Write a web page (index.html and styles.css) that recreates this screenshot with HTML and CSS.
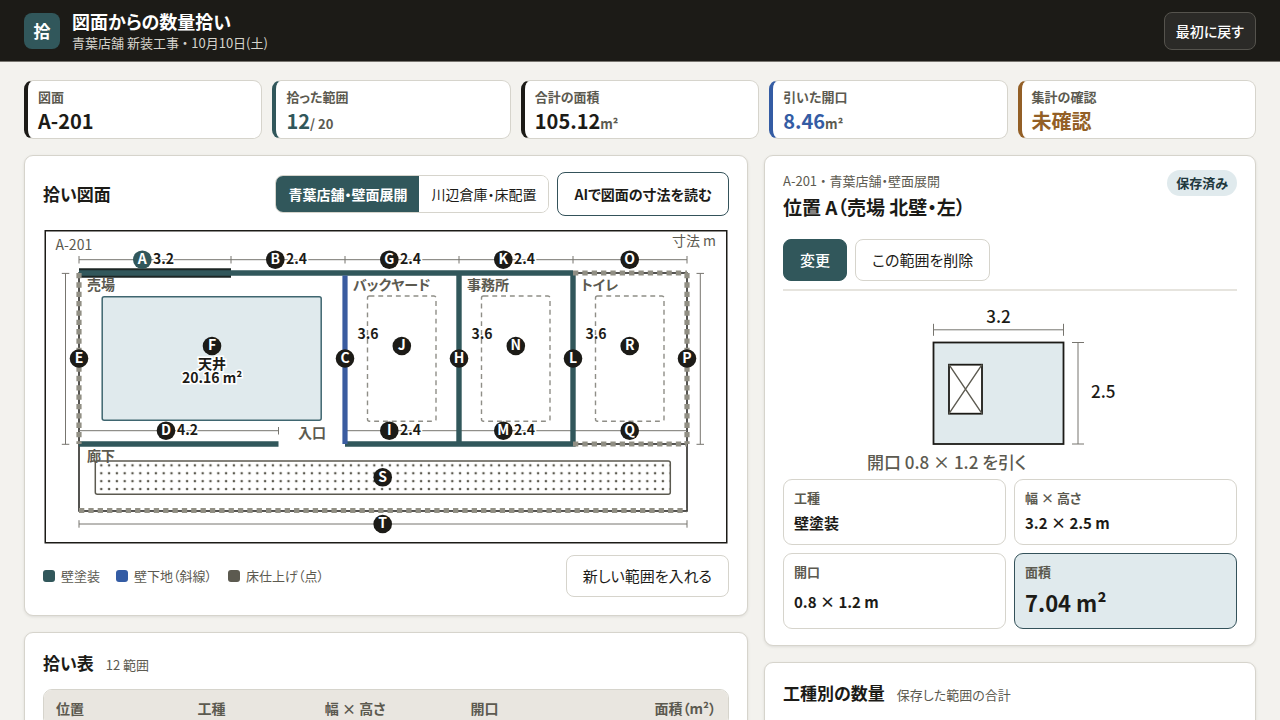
FILE: index.html
```html
<!DOCTYPE html>
<html lang="ja">
<head>
<meta charset="utf-8">
<meta name="viewport" content="width=device-width, initial-scale=1">
<title>図面からの数量拾い</title>
<link rel="stylesheet" href="styles.css">
</head>
<body>
<header class="topbar">
  <div class="logo" aria-hidden="true">拾</div>
  <div class="brand">
    <h1 class="brand-title">図面からの数量拾い</h1>
    <p class="brand-sub">青葉店舗 新装工事 ・ 10月10日(土)</p>
  </div>
  <button class="btn btn-dark" type="button">最初に戻す</button>
</header>

<main class="page">
  <section class="stats" aria-label="集計">
    <div class="stat"><span class="stat-label">図面</span><span class="stat-value">A-201</span></div>
    <div class="stat stat-teal"><span class="stat-label">拾った範囲</span><span class="stat-value">12<small class="unit">/ 20</small></span></div>
    <div class="stat"><span class="stat-label">合計の面積</span><span class="stat-value">105.12<small class="unit">m²</small></span></div>
    <div class="stat stat-blue"><span class="stat-label">引いた開口</span><span class="stat-value">8.46<small class="unit">m²</small></span></div>
    <div class="stat stat-amber"><span class="stat-label">集計の確認</span><span class="stat-value">未確認</span></div>
  </section>

  <div class="columns">
    <div class="column">
      <section class="panel drawing">
        <div class="drawing-head">
          <h2 class="panel-title">拾い図面</h2>
          <div class="segment" role="group" aria-label="図面の切り替え">
            <button class="segment-item is-active" type="button" aria-pressed="true">青葉店舗・壁面展開</button>
            <button class="segment-item" type="button" aria-pressed="false">川辺倉庫・床配置</button>
          </div>
          <button class="btn btn-outline" type="button">AIで図面の寸法を読む</button>
        </div>

        <svg class="plan" viewBox="43 228 686 317" role="img" aria-label="A-201 平面図">
          <defs>
            <pattern id="dots" x="97.4" y="461.4" width="7.8" height="7.9" patternUnits="userSpaceOnUse">
              <circle cx="3.9" cy="3.95" r="1.3" fill="#5c5a50"/>
            </pattern>
          </defs>
          <rect x="45.25" y="230.75" width="681.5" height="312" fill="#fff" stroke="#1c1b17" stroke-width="1.5"/>
          <text class="t-note" x="55.5" y="249.5">A-201</text>
          <text class="t-note" x="716" y="246" text-anchor="end">寸法 m</text>

          <rect x="79" y="273" width="608" height="238" fill="none" stroke="#1c1b17" stroke-width="1.5"/>
          <path d="M573 444H687" stroke="#1c1b17" stroke-width="1.5"/>

          <g class="dim">
            <path d="M79 259.7H687M79 256v7.5M231 256v7.5M345 256v7.5M459 256v7.5M573 256v7.5M687 256v7.5"/>
            <path d="M65.5 273.4V444.3M61.8 273.4h7.5M61.8 444.3h7.5M700.3 273.4V444.3M696.5 273.4h7.5M696.5 444.3h7.5"/>
            <path d="M79 430.7H278.5M278.5 427v7.5M345 430.7H687"/>
            <path d="M79 524H687M79 520.2v7.5M687 520.2v7.5"/>
          </g>

          <g class="t-room">
            <text x="87" y="290">売場</text>
            <text x="353" y="290">バックヤード</text>
            <text x="467" y="290">事務所</text>
            <text x="581" y="290">トイレ</text>
            <text x="87" y="461">廊下</text>
            <text x="298" y="438">入口</text>
          </g>
          <g class="t-dim" text-anchor="middle">
            <text x="368" y="338.5">3.6</text>
            <text x="482" y="338.5">3.6</text>
            <text x="596" y="338.5">3.6</text>
          </g>

          <rect x="102.2" y="296.7" width="219" height="123.5" rx="2" fill="#e0eaed" stroke="#3f6670" stroke-width="1.5"/>
          <g fill="none" stroke="#8f8e87" stroke-width="1.4" stroke-dasharray="4.9 3.9">
            <rect x="367.5" y="296" width="68.5" height="125.3" rx="2"/>
            <rect x="481.5" y="296" width="68.5" height="125.3" rx="2"/>
            <rect x="595.5" y="296" width="68.5" height="125.3" rx="2"/>
          </g>
          <rect x="95.3" y="461" width="575" height="33.3" rx="2" fill="url(#dots)" stroke="#5c5a50" stroke-width="1.5"/>

          <g stroke="#31575b" stroke-width="5.4">
            <path d="M231 273H573M459 273V444M573 273V446.8M345 444H573M79 444H278.5" fill="none"/>
          </g>
          <path d="M345 275.5V444" stroke="#3a5ca0" stroke-width="5.2"/>
          <path d="M79 273H231" stroke="#1c2625" stroke-width="9.6"/>
          <path d="M79 273H231" stroke="#31575b" stroke-width="5.4"/>
          <g stroke="#918f84" stroke-width="5.2" stroke-dasharray="5.3 4.05" fill="none">
            <path d="M79 273V444"/>
            <path d="M687 273V444"/>
            <path d="M573 273H687"/>
            <path d="M573 444H687"/>
            <path d="M79 510.5H687"/>
          </g>

          <g class="t-dim">
            <text x="153" y="263.5">3.2</text>
            <text x="286" y="263.5">2.4</text>
            <text x="400" y="263.5">2.4</text>
            <text x="514" y="263.5">2.4</text>
            <text x="177" y="435">4.2</text>
            <text x="400" y="435">2.4</text>
            <text x="514" y="435">2.4</text>
            <text x="212" y="369" text-anchor="middle">天井</text>
            <text x="212" y="383" text-anchor="middle">20.16 m²</text>
          </g>

          <g fill="#1c1b17">
            <circle cx="142.3" cy="259.7" r="9.3" fill="#31575b"/>
            <circle cx="275.3" cy="259.7" r="9.3"/>
            <circle cx="389.3" cy="259.7" r="9.3"/>
            <circle cx="503.3" cy="259.7" r="9.3"/>
            <circle cx="629.7" cy="259.7" r="9.3"/>
            <circle cx="79" cy="358.5" r="9.3"/>
            <circle cx="345" cy="358.5" r="9.3"/>
            <circle cx="459" cy="358.5" r="9.3"/>
            <circle cx="573" cy="358.5" r="9.3"/>
            <circle cx="687" cy="358.5" r="9.3"/>
            <circle cx="212" cy="346" r="9.3"/>
            <circle cx="401.8" cy="346" r="9.3"/>
            <circle cx="515.8" cy="346" r="9.3"/>
            <circle cx="629.7" cy="346" r="9.3"/>
            <circle cx="166" cy="430.7" r="9.3"/>
            <circle cx="389.3" cy="430.7" r="9.3"/>
            <circle cx="503.3" cy="430.7" r="9.3"/>
            <circle cx="629.7" cy="430.7" r="9.3"/>
            <circle cx="382.7" cy="477.3" r="9.3"/>
            <circle cx="382.7" cy="524" r="9.3"/>
          </g>
          <g class="t-pin">
            <text x="142.3" y="264">A</text>
            <text x="275.3" y="264">B</text>
            <text x="389.3" y="264">G</text>
            <text x="503.3" y="264">K</text>
            <text x="629.7" y="264">O</text>
            <text x="79" y="363">E</text>
            <text x="345" y="363">C</text>
            <text x="459" y="363">H</text>
            <text x="573" y="363">L</text>
            <text x="687" y="363">P</text>
            <text x="212" y="350">F</text>
            <text x="401.8" y="350">J</text>
            <text x="515.8" y="350">N</text>
            <text x="629.7" y="350">R</text>
            <text x="166" y="435">D</text>
            <text x="389.3" y="435">I</text>
            <text x="503.3" y="435">M</text>
            <text x="629.7" y="435">Q</text>
            <text x="382.7" y="482">S</text>
            <text x="382.7" y="528">T</text>
          </g>
        </svg>

        <div class="drawing-foot">
          <ul class="legend">
            <li class="legend-item"><span class="swatch swatch-teal"></span>壁塗装</li>
            <li class="legend-item"><span class="swatch swatch-blue"></span>壁下地（斜線）</li>
            <li class="legend-item"><span class="swatch swatch-olive"></span>床仕上げ（点）</li>
          </ul>
          <button class="btn" type="button">新しい範囲を入れる</button>
        </div>
      </section>

      <section class="panel">
        <div class="title-row">
          <h2 class="panel-title">拾い表</h2>
          <span class="panel-note">12 範囲</span>
        </div>
        <div class="table-wrap">
          <table class="table">
            <thead>
              <tr>
                <th class="col-pos" scope="col">位置</th>
                <th class="col-kind" scope="col">工種</th>
                <th class="col-size" scope="col">幅 × 高さ</th>
                <th scope="col">開口</th>
                <th class="col-area" scope="col">面積（m²）</th>
              </tr>
            </thead>
          </table>
        </div>
      </section>
    </div>

    <div class="column">
      <section class="panel detail">
        <div class="detail-head">
          <div>
            <p class="detail-sub">A-201 ・ 青葉店舗・壁面展開</p>
            <h2 class="detail-title">位置 A（売場 北壁・左）</h2>
          </div>
          <span class="badge">保存済み</span>
        </div>
        <div class="actions">
          <button class="btn btn-primary" type="button">変更</button>
          <button class="btn" type="button">この範囲を削除</button>
        </div>
        <svg class="elevation" viewBox="783 291 454 188" role="img" aria-label="幅 3.2 高さ 2.5 の壁と開口">
          <text class="t-measure" x="998.5" y="323" text-anchor="middle">3.2</text>
          <path class="dim" d="M933.5 329.8H1063.5M933.5 323.8v12M1063.5 323.8v12M1078 342.5V444M1072 342.5h12M1072 444h12"/>
          <rect x="933.5" y="342.5" width="130" height="101.5" fill="#e0eaed" stroke="#1c1b17" stroke-width="1.8"/>
          <rect x="949" y="364.7" width="33" height="49" fill="#fff" stroke="#1c1b17" stroke-width="1.8"/>
          <path d="M949 364.7l33 49M982 364.7l-33 49" stroke="#5c5a50" stroke-width="1.4"/>
          <text class="t-measure" x="1091" y="398">2.5</text>
          <text class="t-caption" x="867" y="469">開口 0.8 × 1.2 を引く</text>
        </svg>
        <dl class="facts">
          <div class="fact"><dt class="fact-label">工種</dt><dd class="fact-value">壁塗装</dd></div>
          <div class="fact"><dt class="fact-label">幅 × 高さ</dt><dd class="fact-value">3.2 × 2.5 m</dd></div>
          <div class="fact"><dt class="fact-label">開口</dt><dd class="fact-value">0.8 × 1.2 m</dd></div>
          <div class="fact fact-main"><dt class="fact-label">面積</dt><dd class="fact-value">7.04 m²</dd></div>
        </dl>
      </section>

      <section class="panel">
        <div class="title-row">
          <h2 class="panel-title">工種別の数量</h2>
          <span class="panel-note">保存した範囲の合計</span>
        </div>
      </section>
    </div>
  </div>
</main>
</body>
</html>
```
FILE: styles.css
```css
:root {
  --ink: #1c1b17;
  --muted: #5c5a50;
  --line: #d6d4cc;
  --teal: #31575b;
  --blue: #345ca4;
  --amber: #935f26;
  --tint: #e0eaed;
}

* { box-sizing: border-box; }

body {
  margin: 0;
  background: #f3f2ee;
  color: var(--ink);
  font-family: "Noto Sans CJK JP", "Noto Sans", sans-serif;
  font-size: 15px;
  line-height: 24px;
  font-feature-settings: "palt";
}

h1, h2, p, ul, dl, dd { margin: 0; padding: 0; }

button { font: inherit; font-feature-settings: inherit; color: inherit; }

.topbar {
  display: flex;
  align-items: center;
  gap: 12px;
  min-height: 62px;
  padding: 8px 24px;
  background: var(--ink);
  color: #fff;
  border-bottom: 1px solid #77756f;
}

.logo {
  display: grid;
  place-items: center;
  width: 36px;
  height: 36px;
  border-radius: 8px;
  background: var(--teal);
  font-size: 17px;
  font-weight: 700;
}

.brand { flex: 1; }
.brand-title { font-size: 18px; line-height: 24px; font-weight: 700; }
.brand-sub { font-size: 13px; line-height: 20px; color: #d6d4cc; }

.btn {
  min-height: 42px;
  padding: 0 16px;
  background: #fff;
  border: 1px solid var(--line);
  border-radius: 8px;
  white-space: nowrap;
}

.btn-dark {
  min-height: 38px;
  padding: 0 11px;
  background: #2b2a27;
  border-color: #55534d;
  font-size: 14px;
  font-weight: 500;
}

.btn-outline {
  min-height: 44px;
  border-color: #34525a;
  font-size: 14px;
  font-weight: 700;
}

.btn-primary {
  background: var(--teal);
  border-color: var(--teal);
  color: #fff;
  font-weight: 500;
}

.page { padding: 18px 24px; }

.stats {
  display: grid;
  grid-template-columns: repeat(5, 1fr);
  gap: 10px;
  margin-bottom: 16px;
}

.stat {
  display: flex;
  flex-direction: column;
  gap: 2px;
  padding: 6px 10px 5px;
  background: #fff;
  border: 1px solid var(--line);
  border-left: 4px solid var(--ink);
  border-radius: 9px;
}

.stat-label { font-size: 13px; line-height: 20px; font-weight: 700; color: var(--muted); }
.stat-value { font-size: 20px; line-height: 24px; font-weight: 700; }
.stat-teal { border-left-color: var(--teal); }
.stat-teal .stat-value { color: var(--teal); }
.stat-blue { border-left-color: var(--blue); }
.stat-blue .stat-value { color: var(--blue); }
.stat-amber { border-left-color: var(--amber); }
.stat-amber .stat-value { color: var(--amber); }
.stat .unit { font-size: 13px; line-height: 16px; font-weight: 700; color: var(--muted); }

.columns {
  display: grid;
  grid-template-columns: minmax(0, 181fr) minmax(0, 123fr);
  gap: 16px;
  align-items: start;
}

.column { display: grid; gap: 16px; }

.panel {
  padding: 18px;
  background: #fff;
  border: 1px solid var(--line);
  border-radius: 9px;
  box-shadow: 0 1px 3px rgba(28, 27, 23, 0.1);
}

.panel-title { font-size: 17px; line-height: 24px; font-weight: 700; }
.panel-note { font-size: 13px; color: var(--muted); }
.title-row { display: flex; align-items: baseline; gap: 12px; margin-bottom: 12px; }

.drawing { padding-top: 16px; }
.drawing-head { display: flex; align-items: center; gap: 8px; margin-bottom: 12px; }
.drawing-head .panel-title { flex: 1; }

.segment {
  display: flex;
  overflow: hidden;
  border: 1px solid var(--line);
  border-radius: 8px;
}

.segment-item {
  min-height: 36px;
  padding: 0 12px;
  background: #fff;
  border: 0;
  font-size: 14px;
  white-space: nowrap;
}

.segment-item.is-active { background: var(--teal); color: #fff; font-weight: 700; }

.plan, .elevation { display: block; width: 100%; height: auto; }
.dim { fill: none; stroke: #77756f; stroke-width: 1; }

.t-note { font-size: 14px; fill: var(--muted); }
.t-room { font-size: 14px; font-weight: 700; fill: var(--muted); }

.t-dim {
  font-size: 14px;
  font-weight: 700;
  fill: var(--ink);
  stroke: #fff;
  stroke-width: 3px;
  paint-order: stroke;
}

.t-pin { font-size: 14px; font-weight: 700; fill: #fff; text-anchor: middle; }
.t-measure { font-size: 17px; font-weight: 500; fill: var(--ink); }
.t-caption { font-size: 17px; font-weight: 500; fill: var(--muted); }

.drawing-foot {
  display: flex;
  align-items: center;
  justify-content: space-between;
  gap: 12px;
  margin-top: 10px;
}

.legend { display: flex; gap: 16px; list-style: none; font-size: 13px; color: var(--muted); }
.legend-item { display: flex; align-items: center; gap: 6px; }
.swatch { width: 12px; height: 12px; border-radius: 3px; }
.swatch-teal { background: var(--teal); }
.swatch-blue { background: var(--blue); }
.swatch-olive { background: var(--muted); }

.table-wrap {
  overflow: hidden;
  border: 1px solid var(--line);
  border-radius: 9px;
}

.table {
  width: 100%;
  border-collapse: collapse;
  table-layout: fixed;
  font-size: 14px;
}

.table th {
  padding: 6px 12px;
  background: #e9e6e0;
  color: var(--muted);
  font-weight: 700;
  text-align: left;
}

.table .col-pos { width: 20.7%; }
.table .col-kind { width: 18.6%; }
.table .col-size { width: 21.3%; }
.table .col-area { text-align: right; }

.detail { padding: 14px 18px 16px; }

.detail-head {
  display: flex;
  justify-content: space-between;
  align-items: flex-start;
  margin-bottom: 17px;
}

.detail-sub { font-size: 13px; line-height: 22px; color: var(--muted); }
.detail-title { font-size: 19px; line-height: 30px; font-weight: 700; }

.badge {
  padding: 0 9px;
  border-radius: 13px;
  background: var(--tint);
  color: #21383d;
  font-size: 13px;
  line-height: 26px;
  font-weight: 700;
}

.actions {
  display: flex;
  gap: 8px;
  padding-bottom: 8px;
  border-bottom: 2px solid #e6e4de;
}

.facts {
  display: grid;
  grid-template-columns: 1fr 1fr;
  gap: 8px;
}

.fact {
  display: flex;
  flex-direction: column;
  gap: 4px;
  padding: 9px 10px;
  border: 1px solid var(--line);
  border-radius: 9px;
}

.fact-label { font-size: 13px; line-height: 18px; font-weight: 700; color: var(--muted); }
.fact-value { display: flex; align-items: center; flex: 1; font-weight: 700; line-height: 24px; }
.fact-main { background: var(--tint); border-color: #34525a; }
.fact-main .fact-value { font-size: 22px; line-height: 34px; }
```
